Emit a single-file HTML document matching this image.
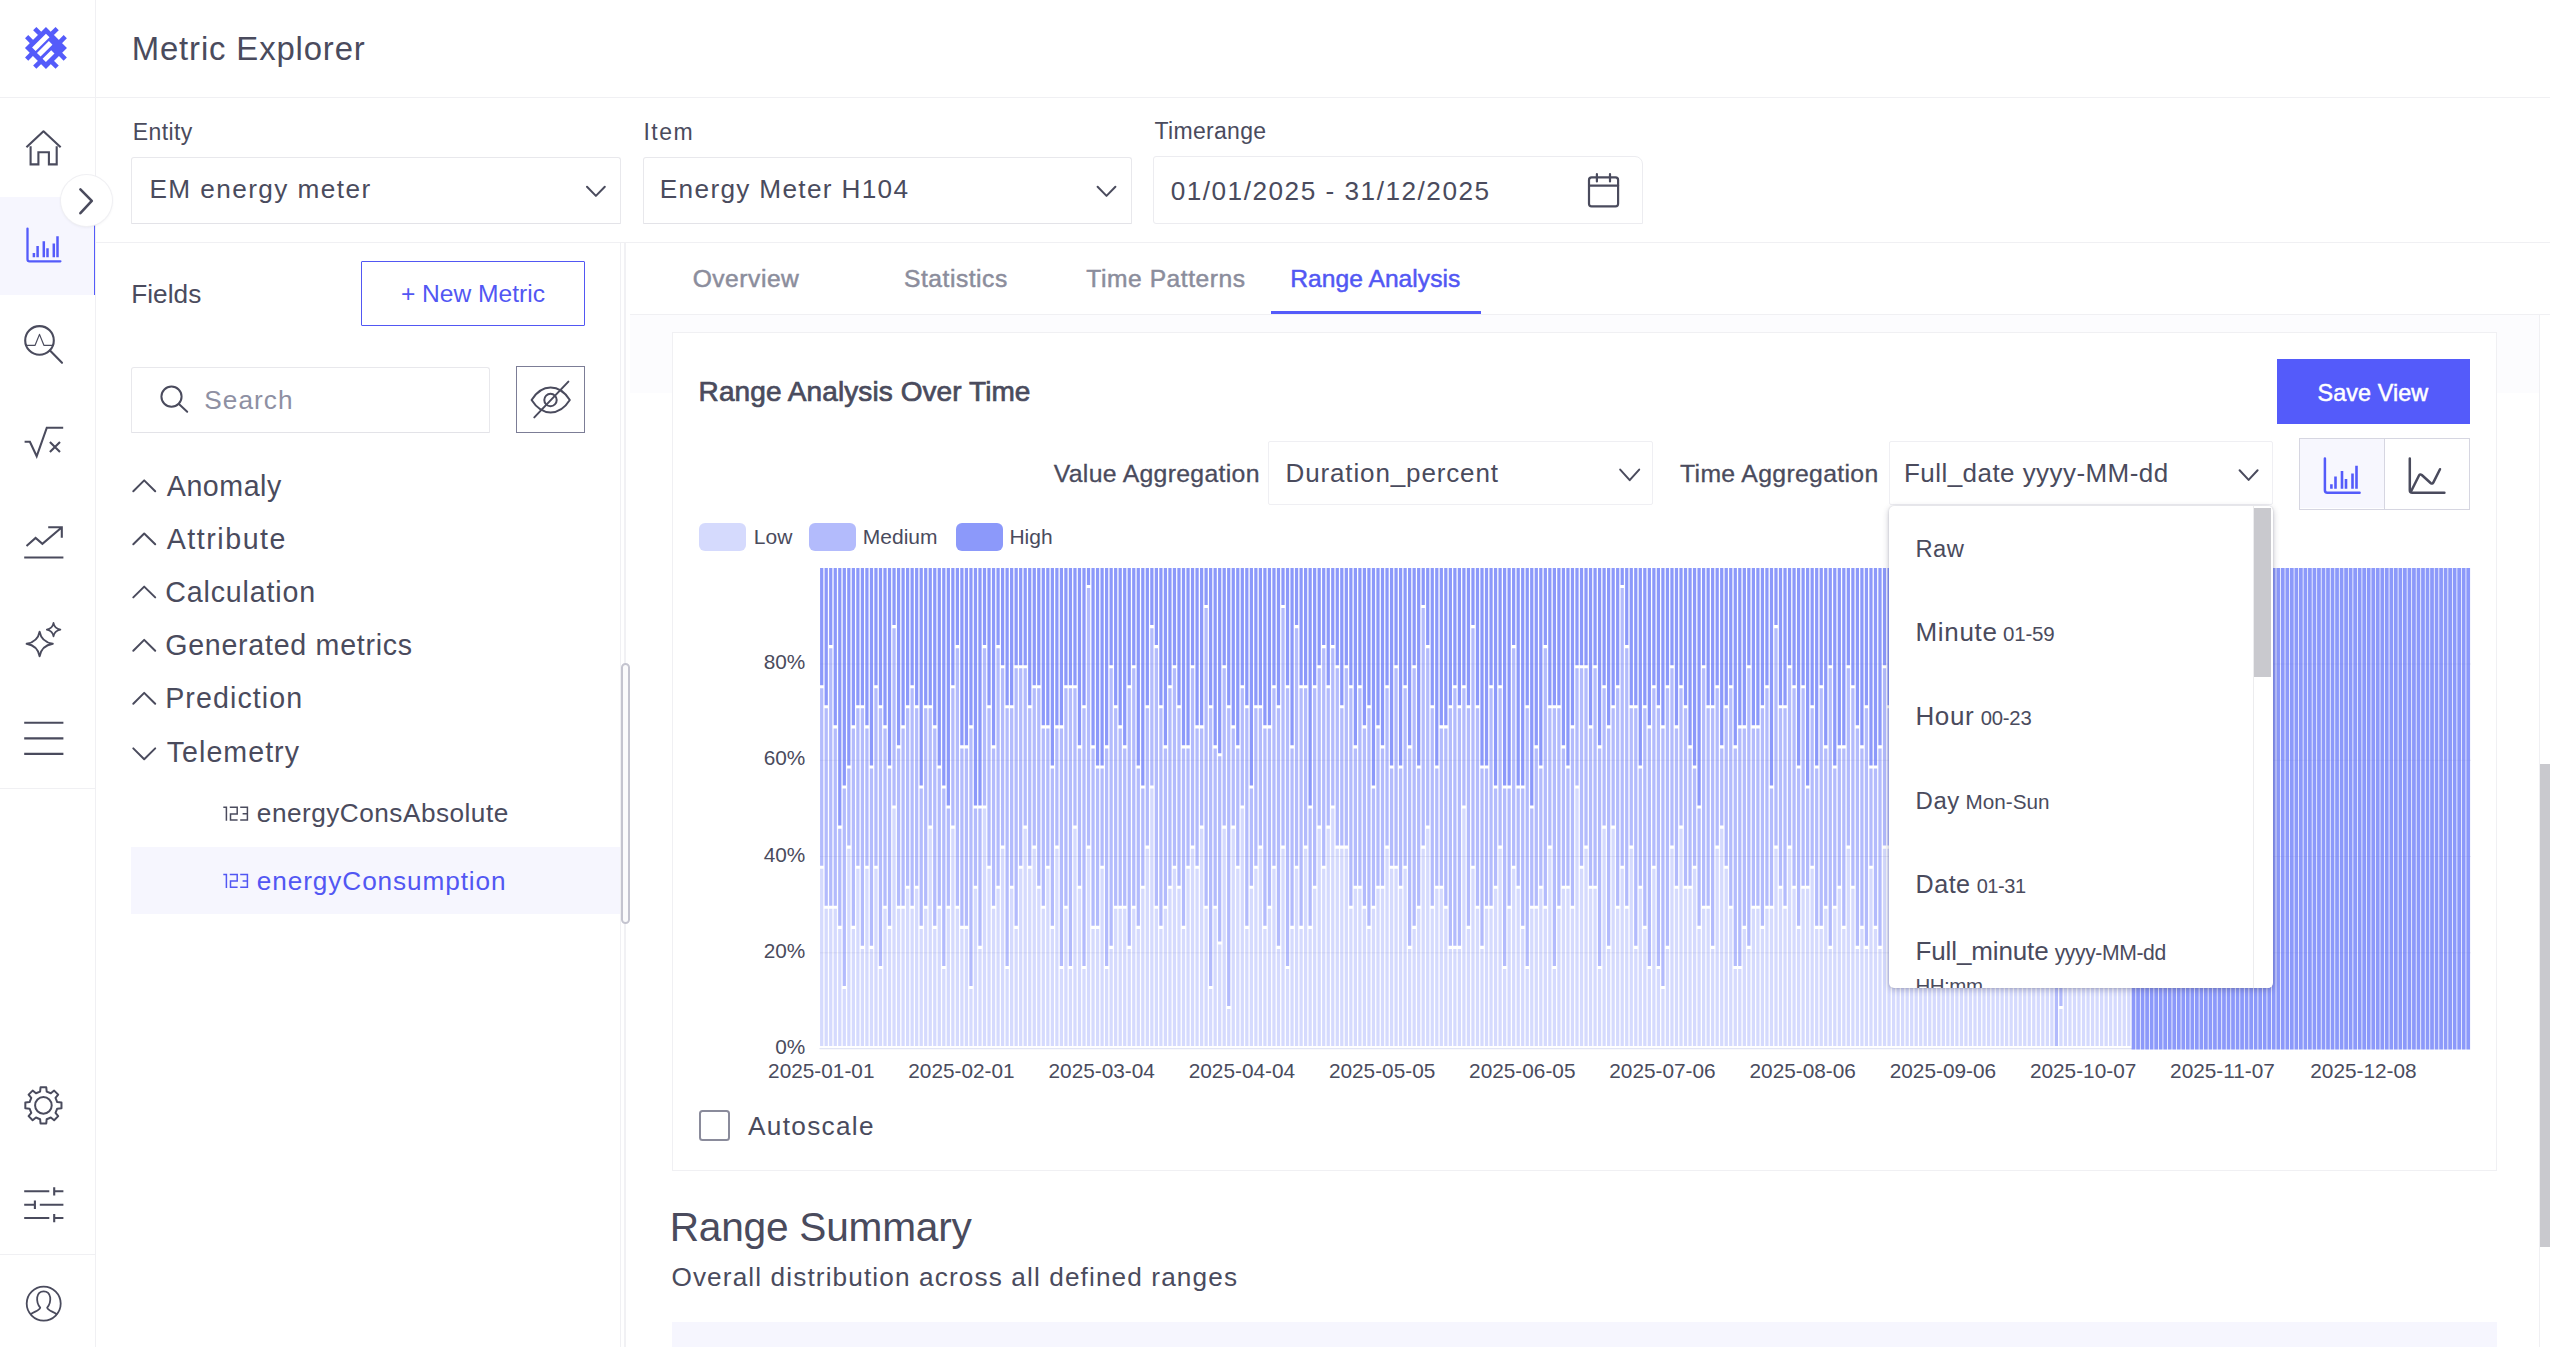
<!DOCTYPE html>
<html lang="en"><head><meta charset="utf-8"><title>Metric Explorer</title>
<style>
html,body{margin:0;padding:0}
body{width:2550px;height:1347px;overflow:hidden;position:relative;background:#fff;color:#4a4b5d;font-family:"Liberation Sans",sans-serif;}
.abs{position:absolute}
.t{position:absolute;white-space:pre;line-height:1;display:block}
.ax{font-size:20.8px}
.ln{position:absolute;background:#f0f0f3}
.box{position:absolute;box-sizing:border-box;border:1.6px solid #e8e8ec;border-bottom-color:#e3e3e8;border-radius:3px 3px 1px 1px;background:#fff}
.sel2{position:absolute;box-sizing:border-box;border:1.6px solid #efeff3;border-radius:2px;background:#fff}
.dd{position:absolute;left:1888.6px;top:506.4px;width:384px;height:481.4px;background:#fff;border-radius:5px;box-shadow:0 2px 6px rgba(40,40,70,.28),0 0 2px rgba(40,40,70,.18);overflow:hidden}
.ddin{position:absolute;left:0;top:0;width:365px;height:100%;overflow:hidden}
.ddtrack{position:absolute;left:364.4px;top:0;width:19px;height:100%;background:#fff;border-left:1px solid #ececee;box-sizing:border-box}
.ddthumb{position:absolute;left:365.5px;top:1.8px;width:17px;height:169px;background:#c9c9ce}
</style></head>
<body>
<!-- sidebar -->
<nav class="abs" style="left:0;top:0;width:95px;height:1347px;border-right:1px solid #f0f0f3"></nav>
<div class="abs" style="left:0;top:197.2px;width:94.4px;height:97.6px;background:#f6f6fe"></div>
<div class="abs" style="left:93.8px;top:197.2px;width:1.7px;height:97.6px;background:#545bfa"></div>
<div class="ln" style="left:0;top:97px;width:2550px;height:1px"></div>
<div class="ln" style="left:0;top:788px;width:95px;height:1px"></div>
<div class="ln" style="left:0;top:1254px;width:95px;height:1px"></div>
<!-- toolbar / panel lines -->
<div class="ln" style="left:96px;top:242px;width:2454px;height:1px"></div>
<div class="ln" style="left:620px;top:243px;width:1px;height:1104px"></div>
<div class="ln" style="left:624px;top:243px;width:2px;height:1104px;background:#f1f1f4"></div>
<div class="abs" style="left:630px;top:315px;width:1909px;height:77.5px;background:#fcfcfe"></div>
<div class="ln" style="left:630px;top:314px;width:1920px;height:1px"></div>
<div class="ln" style="left:2539px;top:315px;width:1px;height:1032px;background:#f0f0f3"></div>
<div class="abs" style="left:2539.6px;top:764px;width:10.4px;height:483px;background:#c9c9ce"></div>
<!-- collapse circle -->
<div class="abs" style="left:60.9px;top:175.3px;width:50.8px;height:50.8px;border-radius:50%;background:#fff;box-shadow:0 0 0 1px #f0f0f3, 0 1px 3px rgba(60,60,90,.10)"></div>
<svg class="abs" style="left:60px;top:175px" width="54" height="54" viewBox="60 175 54 54" fill="none" stroke="#4a4b5d" stroke-width="2.6" stroke-linecap="round" stroke-linejoin="round"><path d="M80.4 189.4L91.8 200.9L80.4 213.2"/></svg>
<!-- selects -->
<div class="box" style="left:131px;top:156.5px;width:490px;height:67px"></div>
<div class="box" style="left:642.5px;top:156.5px;width:489px;height:67px"></div>
<div class="sel2" style="left:1153px;top:156px;width:490px;height:68px;border-radius:3px 8px 0 3px;border-color:#ececf0"></div>
<!-- fields panel -->
<div class="abs" style="left:361px;top:261.2px;width:224px;height:64.4px;box-sizing:border-box;border:1.3px solid #5257f3;border-radius:1px"></div>
<div class="box" style="left:131px;top:366.5px;width:359px;height:66.3px"></div>
<div class="abs" style="left:516px;top:366px;width:69px;height:67px;box-sizing:border-box;border:1.2px solid #7c7d96"></div>
<div class="abs" style="left:131px;top:847.2px;width:489px;height:67.2px;background:#f6f6fe"></div>
<div class="abs" style="left:620.9px;top:662.9px;width:9px;height:261.6px;box-sizing:border-box;border:2.9px solid #c4c4cf;border-radius:4.5px;background:#fbfbfc"></div>
<!-- tabs underline -->
<div class="abs" style="left:1271px;top:310.6px;width:210px;height:3.2px;background:#545bfa"></div>
<!-- card -->
<section class="abs" style="left:672px;top:332px;width:1825px;height:838.5px;box-sizing:border-box;border:1px solid #f0f0f3;background:#fff"></section>
<div class="abs" style="left:2277.2px;top:358.9px;width:192.8px;height:65px;background:#545bfa"></div>
<div class="sel2" style="left:1268px;top:441.3px;width:385px;height:64.2px"></div>
<div class="sel2" style="left:1888.5px;top:441.3px;width:384.3px;height:64.2px"></div>
<div class="abs" style="left:2299.2px;top:438.2px;width:170.8px;height:71.4px;box-sizing:border-box;border:1.2px solid #d6d6e1;background:#fff"></div>
<div class="abs" style="left:2300.4px;top:439.4px;width:83.4px;height:69px;background:#f7f7fe"></div>
<div class="abs" style="left:2383.8px;top:439px;width:1.2px;height:70px;background:#d6d6e1"></div>
<!-- legend -->
<div class="abs" style="left:699.3px;top:523px;width:46.8px;height:27.8px;border-radius:6px;background:rgba(80,99,248,.238)"></div>
<div class="abs" style="left:809.4px;top:523px;width:46.8px;height:27.8px;border-radius:6px;background:rgba(80,99,248,.435)"></div>
<div class="abs" style="left:955.8px;top:523px;width:46.8px;height:27.8px;border-radius:6px;background:rgba(80,99,248,.655)"></div>
<svg class="abs" style="left:0;top:0" width="2550" height="1347" viewBox="0 0 2550 1347">
<g stroke="#efeff3" stroke-width="1"><path d="M820 952.8H2471"/><path d="M820 856.5H2471"/><path d="M820 760.3H2471"/><path d="M820 664.0H2471"/></g>
<path d="M819.5 1048.7H2132" stroke="#e1e4f4" stroke-width="1.3"/>
<path d="M820.07 868.75h3.25V1046.00h-3.25zM824.59 908.85h3.25V1046.00h-3.25zM829.12 908.85h3.25V1046.00h-3.25zM833.64 908.85h3.25V1046.00h-3.25zM838.16 928.90h3.25V1046.00h-3.25zM842.68 989.05h3.25V1046.00h-3.25zM847.21 848.70h3.25V1046.00h-3.25zM851.73 928.90h3.25V1046.00h-3.25zM856.25 868.75h3.25V1046.00h-3.25zM860.77 948.95h3.25V1046.00h-3.25zM865.30 868.75h3.25V1046.00h-3.25zM869.82 948.95h3.25V1046.00h-3.25zM874.34 868.75h3.25V1046.00h-3.25zM878.87 969.00h3.25V1046.00h-3.25zM883.39 908.85h3.25V1046.00h-3.25zM887.91 928.90h3.25V1046.00h-3.25zM892.43 808.60h3.25V1046.00h-3.25zM896.96 908.85h3.25V1046.00h-3.25zM901.48 908.85h3.25V1046.00h-3.25zM906.00 888.80h3.25V1046.00h-3.25zM910.52 908.85h3.25V1046.00h-3.25zM915.05 888.80h3.25V1046.00h-3.25zM919.57 928.90h3.25V1046.00h-3.25zM924.09 908.85h3.25V1046.00h-3.25zM928.61 828.65h3.25V1046.00h-3.25zM933.14 928.90h3.25V1046.00h-3.25zM937.66 908.85h3.25V1046.00h-3.25zM942.18 969.00h3.25V1046.00h-3.25zM946.71 908.85h3.25V1046.00h-3.25zM951.23 828.65h3.25V1046.00h-3.25zM955.75 908.85h3.25V1046.00h-3.25zM960.27 928.90h3.25V1046.00h-3.25zM964.80 928.90h3.25V1046.00h-3.25zM969.32 989.05h3.25V1046.00h-3.25zM973.84 888.80h3.25V1046.00h-3.25zM978.36 948.95h3.25V1046.00h-3.25zM982.89 808.60h3.25V1046.00h-3.25zM987.41 868.75h3.25V1046.00h-3.25zM991.93 908.85h3.25V1046.00h-3.25zM996.46 888.80h3.25V1046.00h-3.25zM1000.98 848.70h3.25V1046.00h-3.25zM1005.50 969.00h3.25V1046.00h-3.25zM1010.02 888.80h3.25V1046.00h-3.25zM1014.55 928.90h3.25V1046.00h-3.25zM1019.07 868.75h3.25V1046.00h-3.25zM1023.59 828.65h3.25V1046.00h-3.25zM1028.11 868.75h3.25V1046.00h-3.25zM1032.64 848.70h3.25V1046.00h-3.25zM1037.16 888.80h3.25V1046.00h-3.25zM1041.68 908.85h3.25V1046.00h-3.25zM1046.21 868.75h3.25V1046.00h-3.25zM1050.73 928.90h3.25V1046.00h-3.25zM1055.25 848.70h3.25V1046.00h-3.25zM1059.77 969.00h3.25V1046.00h-3.25zM1064.30 908.85h3.25V1046.00h-3.25zM1068.82 969.00h3.25V1046.00h-3.25zM1073.34 828.65h3.25V1046.00h-3.25zM1077.86 888.80h3.25V1046.00h-3.25zM1082.39 969.00h3.25V1046.00h-3.25zM1086.91 848.70h3.25V1046.00h-3.25zM1091.43 928.90h3.25V1046.00h-3.25zM1095.95 928.90h3.25V1046.00h-3.25zM1100.48 868.75h3.25V1046.00h-3.25zM1105.00 969.00h3.25V1046.00h-3.25zM1109.52 948.95h3.25V1046.00h-3.25zM1114.05 908.85h3.25V1046.00h-3.25zM1118.57 908.85h3.25V1046.00h-3.25zM1123.09 908.85h3.25V1046.00h-3.25zM1127.61 948.95h3.25V1046.00h-3.25zM1132.14 908.85h3.25V1046.00h-3.25zM1136.66 928.90h3.25V1046.00h-3.25zM1141.18 888.80h3.25V1046.00h-3.25zM1145.70 848.70h3.25V1046.00h-3.25zM1150.23 788.55h3.25V1046.00h-3.25zM1154.75 908.85h3.25V1046.00h-3.25zM1159.27 928.90h3.25V1046.00h-3.25zM1163.80 908.85h3.25V1046.00h-3.25zM1168.32 888.80h3.25V1046.00h-3.25zM1172.84 868.75h3.25V1046.00h-3.25zM1177.36 888.80h3.25V1046.00h-3.25zM1181.89 928.90h3.25V1046.00h-3.25zM1186.41 868.75h3.25V1046.00h-3.25zM1190.93 848.70h3.25V1046.00h-3.25zM1195.45 868.75h3.25V1046.00h-3.25zM1199.98 828.65h3.25V1046.00h-3.25zM1204.50 908.85h3.25V1046.00h-3.25zM1209.02 989.05h3.25V1046.00h-3.25zM1213.54 908.85h3.25V1046.00h-3.25zM1218.07 944.54h3.25V1046.00h-3.25zM1222.59 828.65h3.25V1046.00h-3.25zM1227.11 1009.10h3.25V1046.00h-3.25zM1231.64 828.65h3.25V1046.00h-3.25zM1236.16 868.75h3.25V1046.00h-3.25zM1240.68 808.60h3.25V1046.00h-3.25zM1245.20 928.90h3.25V1046.00h-3.25zM1249.73 888.80h3.25V1046.00h-3.25zM1254.25 868.75h3.25V1046.00h-3.25zM1258.77 848.70h3.25V1046.00h-3.25zM1263.29 928.90h3.25V1046.00h-3.25zM1267.82 908.85h3.25V1046.00h-3.25zM1272.34 868.75h3.25V1046.00h-3.25zM1276.86 948.95h3.25V1046.00h-3.25zM1281.39 848.70h3.25V1046.00h-3.25zM1285.91 969.00h3.25V1046.00h-3.25zM1290.43 928.90h3.25V1046.00h-3.25zM1294.95 868.75h3.25V1046.00h-3.25zM1299.48 928.90h3.25V1046.00h-3.25zM1304.00 848.70h3.25V1046.00h-3.25zM1308.52 928.90h3.25V1046.00h-3.25zM1313.04 888.80h3.25V1046.00h-3.25zM1317.57 828.65h3.25V1046.00h-3.25zM1322.09 868.75h3.25V1046.00h-3.25zM1326.61 828.65h3.25V1046.00h-3.25zM1331.14 808.60h3.25V1046.00h-3.25zM1335.66 848.70h3.25V1046.00h-3.25zM1340.18 848.70h3.25V1046.00h-3.25zM1344.70 848.70h3.25V1046.00h-3.25zM1349.23 908.85h3.25V1046.00h-3.25zM1353.75 888.80h3.25V1046.00h-3.25zM1358.27 888.80h3.25V1046.00h-3.25zM1362.79 908.85h3.25V1046.00h-3.25zM1367.32 928.90h3.25V1046.00h-3.25zM1371.84 908.85h3.25V1046.00h-3.25zM1376.36 888.80h3.25V1046.00h-3.25zM1380.88 888.80h3.25V1046.00h-3.25zM1385.41 848.70h3.25V1046.00h-3.25zM1389.93 868.75h3.25V1046.00h-3.25zM1394.45 868.75h3.25V1046.00h-3.25zM1398.98 888.80h3.25V1046.00h-3.25zM1403.50 868.75h3.25V1046.00h-3.25zM1408.02 948.95h3.25V1046.00h-3.25zM1412.54 928.90h3.25V1046.00h-3.25zM1417.07 908.85h3.25V1046.00h-3.25zM1421.59 848.70h3.25V1046.00h-3.25zM1426.11 828.65h3.25V1046.00h-3.25zM1430.63 908.85h3.25V1046.00h-3.25zM1435.16 888.80h3.25V1046.00h-3.25zM1439.68 888.80h3.25V1046.00h-3.25zM1444.20 908.85h3.25V1046.00h-3.25zM1448.73 948.95h3.25V1046.00h-3.25zM1453.25 948.95h3.25V1046.00h-3.25zM1457.77 948.95h3.25V1046.00h-3.25zM1462.29 808.60h3.25V1046.00h-3.25zM1466.82 928.90h3.25V1046.00h-3.25zM1471.34 868.75h3.25V1046.00h-3.25zM1475.86 908.85h3.25V1046.00h-3.25zM1480.38 948.95h3.25V1046.00h-3.25zM1484.91 908.85h3.25V1046.00h-3.25zM1489.43 908.85h3.25V1046.00h-3.25zM1493.95 888.80h3.25V1046.00h-3.25zM1498.48 848.70h3.25V1046.00h-3.25zM1503.00 969.00h3.25V1046.00h-3.25zM1507.52 908.85h3.25V1046.00h-3.25zM1512.04 868.75h3.25V1046.00h-3.25zM1516.57 888.80h3.25V1046.00h-3.25zM1521.09 928.90h3.25V1046.00h-3.25zM1525.61 969.00h3.25V1046.00h-3.25zM1530.13 908.85h3.25V1046.00h-3.25zM1534.66 908.85h3.25V1046.00h-3.25zM1539.18 888.80h3.25V1046.00h-3.25zM1543.70 908.85h3.25V1046.00h-3.25zM1548.22 848.70h3.25V1046.00h-3.25zM1552.75 969.00h3.25V1046.00h-3.25zM1557.27 908.85h3.25V1046.00h-3.25zM1561.79 888.80h3.25V1046.00h-3.25zM1566.32 888.80h3.25V1046.00h-3.25zM1570.84 908.85h3.25V1046.00h-3.25zM1575.36 788.55h3.25V1046.00h-3.25zM1579.88 868.75h3.25V1046.00h-3.25zM1584.41 848.70h3.25V1046.00h-3.25zM1588.93 888.80h3.25V1046.00h-3.25zM1593.45 888.80h3.25V1046.00h-3.25zM1597.97 969.00h3.25V1046.00h-3.25zM1602.50 828.65h3.25V1046.00h-3.25zM1607.02 948.95h3.25V1046.00h-3.25zM1611.54 828.65h3.25V1046.00h-3.25zM1616.07 908.85h3.25V1046.00h-3.25zM1620.59 868.75h3.25V1046.00h-3.25zM1625.11 908.85h3.25V1046.00h-3.25zM1629.63 848.70h3.25V1046.00h-3.25zM1634.16 948.95h3.25V1046.00h-3.25zM1638.68 888.80h3.25V1046.00h-3.25zM1643.20 928.90h3.25V1046.00h-3.25zM1647.72 969.00h3.25V1046.00h-3.25zM1652.25 868.75h3.25V1046.00h-3.25zM1656.77 969.00h3.25V1046.00h-3.25zM1661.29 989.05h3.25V1046.00h-3.25zM1665.81 948.95h3.25V1046.00h-3.25zM1670.34 848.70h3.25V1046.00h-3.25zM1674.86 888.80h3.25V1046.00h-3.25zM1679.38 828.65h3.25V1046.00h-3.25zM1683.91 888.80h3.25V1046.00h-3.25zM1688.43 888.80h3.25V1046.00h-3.25zM1692.95 868.75h3.25V1046.00h-3.25zM1697.47 928.90h3.25V1046.00h-3.25zM1702.00 908.85h3.25V1046.00h-3.25zM1706.52 908.85h3.25V1046.00h-3.25zM1711.04 948.95h3.25V1046.00h-3.25zM1715.56 848.70h3.25V1046.00h-3.25zM1720.09 828.65h3.25V1046.00h-3.25zM1724.61 868.75h3.25V1046.00h-3.25zM1729.13 908.85h3.25V1046.00h-3.25zM1733.66 969.00h3.25V1046.00h-3.25zM1738.18 969.00h3.25V1046.00h-3.25zM1742.70 928.90h3.25V1046.00h-3.25zM1747.22 948.95h3.25V1046.00h-3.25zM1751.75 908.85h3.25V1046.00h-3.25zM1756.27 908.85h3.25V1046.00h-3.25zM1760.79 928.90h3.25V1046.00h-3.25zM1765.31 908.85h3.25V1046.00h-3.25zM1769.84 908.85h3.25V1046.00h-3.25zM1774.36 848.70h3.25V1046.00h-3.25zM1778.88 888.80h3.25V1046.00h-3.25zM1783.41 908.85h3.25V1046.00h-3.25zM1787.93 848.70h3.25V1046.00h-3.25zM1792.45 888.80h3.25V1046.00h-3.25zM1796.97 928.90h3.25V1046.00h-3.25zM1801.50 888.80h3.25V1046.00h-3.25zM1806.02 888.80h3.25V1046.00h-3.25zM1810.54 868.75h3.25V1046.00h-3.25zM1815.06 928.90h3.25V1046.00h-3.25zM1819.59 928.90h3.25V1046.00h-3.25zM1824.11 908.85h3.25V1046.00h-3.25zM1828.63 948.95h3.25V1046.00h-3.25zM1833.15 908.85h3.25V1046.00h-3.25zM1837.68 888.80h3.25V1046.00h-3.25zM1842.20 928.90h3.25V1046.00h-3.25zM1846.72 848.70h3.25V1046.00h-3.25zM1851.25 888.80h3.25V1046.00h-3.25zM1855.77 948.95h3.25V1046.00h-3.25zM1860.29 928.90h3.25V1046.00h-3.25zM1864.81 948.95h3.25V1046.00h-3.25zM1869.34 868.75h3.25V1046.00h-3.25zM1873.86 928.90h3.25V1046.00h-3.25zM1878.38 948.95h3.25V1046.00h-3.25zM1882.90 848.70h3.25V1046.00h-3.25zM1887.43 848.70h3.25V1046.00h-3.25zM1891.95 928.90h3.25V1046.00h-3.25zM1896.47 928.90h3.25V1046.00h-3.25zM1901.00 868.75h3.25V1046.00h-3.25zM1905.52 828.65h3.25V1046.00h-3.25zM1910.04 888.80h3.25V1046.00h-3.25zM1914.56 848.70h3.25V1046.00h-3.25zM1919.09 948.95h3.25V1046.00h-3.25zM1923.61 888.80h3.25V1046.00h-3.25zM1928.13 848.70h3.25V1046.00h-3.25zM1932.65 888.80h3.25V1046.00h-3.25zM1937.18 848.70h3.25V1046.00h-3.25zM1941.70 948.95h3.25V1046.00h-3.25zM1946.22 928.90h3.25V1046.00h-3.25zM1950.75 928.90h3.25V1046.00h-3.25zM1955.27 848.70h3.25V1046.00h-3.25zM1959.79 908.85h3.25V1046.00h-3.25zM1964.31 948.95h3.25V1046.00h-3.25zM1968.84 848.70h3.25V1046.00h-3.25zM1973.36 828.65h3.25V1046.00h-3.25zM1977.88 848.70h3.25V1046.00h-3.25zM1982.40 888.80h3.25V1046.00h-3.25zM1986.93 808.60h3.25V1046.00h-3.25zM1991.45 908.85h3.25V1046.00h-3.25zM1995.97 888.80h3.25V1046.00h-3.25zM2000.49 908.85h3.25V1046.00h-3.25zM2005.02 848.70h3.25V1046.00h-3.25zM2009.54 868.75h3.25V1046.00h-3.25zM2014.06 948.95h3.25V1046.00h-3.25zM2018.59 868.75h3.25V1046.00h-3.25zM2023.11 908.85h3.25V1046.00h-3.25zM2027.63 948.95h3.25V1046.00h-3.25zM2032.15 848.70h3.25V1046.00h-3.25zM2036.68 788.55h3.25V1046.00h-3.25zM2041.20 888.80h3.25V1046.00h-3.25zM2045.72 908.85h3.25V1046.00h-3.25zM2050.24 908.85h3.25V1046.00h-3.25zM2059.29 1009.10h3.25V1046.00h-3.25zM2063.81 908.85h3.25V1046.00h-3.25zM2068.34 888.80h3.25V1046.00h-3.25zM2072.86 908.85h3.25V1046.00h-3.25zM2077.38 808.60h3.25V1046.00h-3.25zM2081.90 928.90h3.25V1046.00h-3.25zM2086.43 948.95h3.25V1046.00h-3.25zM2090.95 888.80h3.25V1046.00h-3.25zM2095.47 888.80h3.25V1046.00h-3.25zM2099.99 928.90h3.25V1046.00h-3.25zM2104.52 868.75h3.25V1046.00h-3.25zM2109.04 928.90h3.25V1046.00h-3.25zM2113.56 828.65h3.25V1046.00h-3.25zM2118.08 888.80h3.25V1046.00h-3.25zM2122.61 868.75h3.25V1046.00h-3.25zM2127.13 828.65h3.25V1046.00h-3.25z" fill="#5063f8" fill-opacity="0.238"/>
<path d="M820.07 688.30h3.25V865.65h-3.25zM824.59 708.35h3.25V905.75h-3.25zM829.12 648.20h3.25V905.75h-3.25zM833.64 728.40h3.25V905.75h-3.25zM838.16 828.65h3.25V925.80h-3.25zM842.68 788.55h3.25V985.95h-3.25zM847.21 768.50h3.25V845.60h-3.25zM851.73 728.40h3.25V925.80h-3.25zM856.25 708.35h3.25V865.65h-3.25zM860.77 708.35h3.25V945.85h-3.25zM865.30 728.40h3.25V865.65h-3.25zM869.82 768.50h3.25V945.85h-3.25zM874.34 688.30h3.25V865.65h-3.25zM878.87 708.35h3.25V965.90h-3.25zM883.39 728.40h3.25V905.75h-3.25zM887.91 768.50h3.25V925.80h-3.25zM892.43 628.15h3.25V805.50h-3.25zM896.96 748.45h3.25V905.75h-3.25zM901.48 728.40h3.25V905.75h-3.25zM906.00 708.35h3.25V885.70h-3.25zM910.52 688.30h3.25V905.75h-3.25zM915.05 708.35h3.25V885.70h-3.25zM919.57 788.55h3.25V925.80h-3.25zM924.09 708.35h3.25V905.75h-3.25zM928.61 708.35h3.25V825.55h-3.25zM933.14 728.40h3.25V925.80h-3.25zM937.66 768.50h3.25V905.75h-3.25zM942.18 788.55h3.25V965.90h-3.25zM946.71 808.60h3.25V905.75h-3.25zM951.23 688.30h3.25V825.55h-3.25zM955.75 648.20h3.25V905.75h-3.25zM960.27 748.45h3.25V925.80h-3.25zM964.80 748.45h3.25V925.80h-3.25zM969.32 728.40h3.25V985.95h-3.25zM973.84 808.60h3.25V885.70h-3.25zM978.36 808.60h3.25V945.85h-3.25zM982.89 648.20h3.25V805.50h-3.25zM987.41 708.35h3.25V865.65h-3.25zM991.93 748.45h3.25V905.75h-3.25zM996.46 648.20h3.25V885.70h-3.25zM1000.98 668.25h3.25V845.60h-3.25zM1005.50 708.35h3.25V965.90h-3.25zM1010.02 708.35h3.25V885.70h-3.25zM1014.55 668.25h3.25V925.80h-3.25zM1019.07 668.25h3.25V865.65h-3.25zM1023.59 668.25h3.25V825.55h-3.25zM1028.11 708.35h3.25V865.65h-3.25zM1032.64 688.30h3.25V845.60h-3.25zM1037.16 688.30h3.25V885.70h-3.25zM1041.68 728.40h3.25V905.75h-3.25zM1046.21 728.40h3.25V865.65h-3.25zM1050.73 768.50h3.25V925.80h-3.25zM1055.25 728.40h3.25V845.60h-3.25zM1059.77 728.40h3.25V965.90h-3.25zM1064.30 688.30h3.25V905.75h-3.25zM1068.82 688.30h3.25V965.90h-3.25zM1073.34 688.30h3.25V825.55h-3.25zM1077.86 748.45h3.25V885.70h-3.25zM1082.39 708.35h3.25V965.90h-3.25zM1086.91 588.05h3.25V845.60h-3.25zM1091.43 748.45h3.25V925.80h-3.25zM1095.95 768.50h3.25V925.80h-3.25zM1100.48 768.50h3.25V865.65h-3.25zM1105.00 748.45h3.25V965.90h-3.25zM1109.52 668.25h3.25V945.85h-3.25zM1114.05 708.35h3.25V905.75h-3.25zM1118.57 728.40h3.25V905.75h-3.25zM1123.09 748.45h3.25V905.75h-3.25zM1127.61 688.30h3.25V945.85h-3.25zM1132.14 668.25h3.25V905.75h-3.25zM1136.66 768.50h3.25V925.80h-3.25zM1141.18 788.55h3.25V885.70h-3.25zM1145.70 708.35h3.25V845.60h-3.25zM1150.23 628.15h3.25V785.45h-3.25zM1154.75 648.20h3.25V905.75h-3.25zM1159.27 708.35h3.25V925.80h-3.25zM1163.80 748.45h3.25V905.75h-3.25zM1168.32 688.30h3.25V885.70h-3.25zM1172.84 668.25h3.25V865.65h-3.25zM1177.36 708.35h3.25V885.70h-3.25zM1181.89 748.45h3.25V925.80h-3.25zM1186.41 748.45h3.25V865.65h-3.25zM1190.93 668.25h3.25V845.60h-3.25zM1195.45 728.40h3.25V865.65h-3.25zM1199.98 728.40h3.25V825.55h-3.25zM1204.50 608.10h3.25V905.75h-3.25zM1209.02 708.35h3.25V985.95h-3.25zM1213.54 748.45h3.25V905.75h-3.25zM1218.07 756.27h3.25V941.44h-3.25zM1222.59 668.25h3.25V825.55h-3.25zM1227.11 708.35h3.25V1006.00h-3.25zM1231.64 728.40h3.25V825.55h-3.25zM1236.16 748.45h3.25V865.65h-3.25zM1240.68 688.30h3.25V805.50h-3.25zM1245.20 708.35h3.25V925.80h-3.25zM1249.73 788.55h3.25V885.70h-3.25zM1254.25 708.35h3.25V865.65h-3.25zM1258.77 708.35h3.25V845.60h-3.25zM1263.29 728.40h3.25V925.80h-3.25zM1267.82 728.40h3.25V905.75h-3.25zM1272.34 688.30h3.25V865.65h-3.25zM1276.86 708.35h3.25V945.85h-3.25zM1281.39 608.10h3.25V845.60h-3.25zM1285.91 688.30h3.25V965.90h-3.25zM1290.43 748.45h3.25V925.80h-3.25zM1294.95 628.15h3.25V865.65h-3.25zM1299.48 688.30h3.25V925.80h-3.25zM1304.00 688.30h3.25V845.60h-3.25zM1308.52 808.60h3.25V925.80h-3.25zM1313.04 688.30h3.25V885.70h-3.25zM1317.57 668.25h3.25V825.55h-3.25zM1322.09 648.20h3.25V865.65h-3.25zM1326.61 688.30h3.25V825.55h-3.25zM1331.14 648.20h3.25V805.50h-3.25zM1335.66 668.25h3.25V845.60h-3.25zM1340.18 708.35h3.25V845.60h-3.25zM1344.70 668.25h3.25V845.60h-3.25zM1349.23 688.30h3.25V905.75h-3.25zM1353.75 748.45h3.25V885.70h-3.25zM1358.27 688.30h3.25V885.70h-3.25zM1362.79 728.40h3.25V905.75h-3.25zM1367.32 708.35h3.25V925.80h-3.25zM1371.84 788.55h3.25V905.75h-3.25zM1376.36 728.40h3.25V885.70h-3.25zM1380.88 748.45h3.25V885.70h-3.25zM1385.41 688.30h3.25V845.60h-3.25zM1389.93 768.50h3.25V865.65h-3.25zM1394.45 668.25h3.25V865.65h-3.25zM1398.98 768.50h3.25V885.70h-3.25zM1403.50 688.30h3.25V865.65h-3.25zM1408.02 748.45h3.25V945.85h-3.25zM1412.54 668.25h3.25V925.80h-3.25zM1417.07 768.50h3.25V905.75h-3.25zM1421.59 608.10h3.25V845.60h-3.25zM1426.11 648.20h3.25V825.55h-3.25zM1430.63 708.35h3.25V905.75h-3.25zM1435.16 768.50h3.25V885.70h-3.25zM1439.68 728.40h3.25V885.70h-3.25zM1444.20 728.40h3.25V905.75h-3.25zM1448.73 708.35h3.25V945.85h-3.25zM1453.25 688.30h3.25V945.85h-3.25zM1457.77 708.35h3.25V945.85h-3.25zM1462.29 688.30h3.25V805.50h-3.25zM1466.82 708.35h3.25V925.80h-3.25zM1471.34 628.15h3.25V865.65h-3.25zM1475.86 708.35h3.25V905.75h-3.25zM1480.38 768.50h3.25V945.85h-3.25zM1484.91 768.50h3.25V905.75h-3.25zM1489.43 688.30h3.25V905.75h-3.25zM1493.95 788.55h3.25V885.70h-3.25zM1498.48 688.30h3.25V845.60h-3.25zM1503.00 788.55h3.25V965.90h-3.25zM1507.52 788.55h3.25V905.75h-3.25zM1512.04 648.20h3.25V865.65h-3.25zM1516.57 788.55h3.25V885.70h-3.25zM1521.09 788.55h3.25V925.80h-3.25zM1525.61 708.35h3.25V965.90h-3.25zM1530.13 808.60h3.25V905.75h-3.25zM1534.66 748.45h3.25V905.75h-3.25zM1539.18 768.50h3.25V885.70h-3.25zM1543.70 648.20h3.25V905.75h-3.25zM1548.22 708.35h3.25V845.60h-3.25zM1552.75 708.35h3.25V965.90h-3.25zM1557.27 708.35h3.25V905.75h-3.25zM1561.79 748.45h3.25V885.70h-3.25zM1566.32 768.50h3.25V885.70h-3.25zM1570.84 728.40h3.25V905.75h-3.25zM1575.36 668.25h3.25V785.45h-3.25zM1579.88 668.25h3.25V865.65h-3.25zM1584.41 668.25h3.25V845.60h-3.25zM1588.93 728.40h3.25V885.70h-3.25zM1593.45 668.25h3.25V885.70h-3.25zM1597.97 748.45h3.25V965.90h-3.25zM1602.50 688.30h3.25V825.55h-3.25zM1607.02 728.40h3.25V945.85h-3.25zM1611.54 708.35h3.25V825.55h-3.25zM1616.07 688.30h3.25V905.75h-3.25zM1620.59 588.05h3.25V865.65h-3.25zM1625.11 648.20h3.25V905.75h-3.25zM1629.63 708.35h3.25V845.60h-3.25zM1634.16 708.35h3.25V945.85h-3.25zM1638.68 768.50h3.25V885.70h-3.25zM1643.20 708.35h3.25V925.80h-3.25zM1647.72 728.40h3.25V965.90h-3.25zM1652.25 688.30h3.25V865.65h-3.25zM1656.77 708.35h3.25V965.90h-3.25zM1661.29 728.40h3.25V985.95h-3.25zM1665.81 688.30h3.25V945.85h-3.25zM1670.34 668.25h3.25V845.60h-3.25zM1674.86 728.40h3.25V885.70h-3.25zM1679.38 688.30h3.25V825.55h-3.25zM1683.91 708.35h3.25V885.70h-3.25zM1688.43 748.45h3.25V885.70h-3.25zM1692.95 768.50h3.25V865.65h-3.25zM1697.47 808.60h3.25V925.80h-3.25zM1702.00 668.25h3.25V905.75h-3.25zM1706.52 708.35h3.25V905.75h-3.25zM1711.04 708.35h3.25V945.85h-3.25zM1715.56 688.30h3.25V845.60h-3.25zM1720.09 748.45h3.25V825.55h-3.25zM1724.61 708.35h3.25V865.65h-3.25zM1729.13 688.30h3.25V905.75h-3.25zM1733.66 748.45h3.25V965.90h-3.25zM1738.18 728.40h3.25V965.90h-3.25zM1742.70 728.40h3.25V925.80h-3.25zM1747.22 668.25h3.25V945.85h-3.25zM1751.75 728.40h3.25V905.75h-3.25zM1756.27 728.40h3.25V905.75h-3.25zM1760.79 708.35h3.25V925.80h-3.25zM1765.31 688.30h3.25V905.75h-3.25zM1769.84 788.55h3.25V905.75h-3.25zM1774.36 628.15h3.25V845.60h-3.25zM1778.88 708.35h3.25V885.70h-3.25zM1783.41 708.35h3.25V905.75h-3.25zM1787.93 668.25h3.25V845.60h-3.25zM1792.45 688.30h3.25V885.70h-3.25zM1796.97 768.50h3.25V925.80h-3.25zM1801.50 688.30h3.25V885.70h-3.25zM1806.02 788.55h3.25V885.70h-3.25zM1810.54 708.35h3.25V865.65h-3.25zM1815.06 768.50h3.25V925.80h-3.25zM1819.59 688.30h3.25V925.80h-3.25zM1824.11 748.45h3.25V905.75h-3.25zM1828.63 668.25h3.25V945.85h-3.25zM1833.15 768.50h3.25V905.75h-3.25zM1837.68 748.45h3.25V885.70h-3.25zM1842.20 748.45h3.25V925.80h-3.25zM1846.72 668.25h3.25V845.60h-3.25zM1851.25 688.30h3.25V885.70h-3.25zM1855.77 728.40h3.25V945.85h-3.25zM1860.29 748.45h3.25V925.80h-3.25zM1864.81 708.35h3.25V945.85h-3.25zM1869.34 768.50h3.25V865.65h-3.25zM1873.86 768.50h3.25V925.80h-3.25zM1878.38 748.45h3.25V945.85h-3.25zM1882.90 668.25h3.25V845.60h-3.25zM1887.43 708.35h3.25V845.60h-3.25zM1891.95 688.30h3.25V925.80h-3.25zM1896.47 708.35h3.25V925.80h-3.25zM1901.00 708.35h3.25V865.65h-3.25zM1905.52 748.45h3.25V825.55h-3.25zM1910.04 688.30h3.25V885.70h-3.25zM1914.56 708.35h3.25V845.60h-3.25zM1919.09 748.45h3.25V945.85h-3.25zM1923.61 788.55h3.25V885.70h-3.25zM1928.13 688.30h3.25V845.60h-3.25zM1932.65 688.30h3.25V885.70h-3.25zM1937.18 688.30h3.25V845.60h-3.25zM1941.70 668.25h3.25V945.85h-3.25zM1946.22 668.25h3.25V925.80h-3.25zM1950.75 708.35h3.25V925.80h-3.25zM1955.27 708.35h3.25V845.60h-3.25zM1959.79 808.60h3.25V905.75h-3.25zM1964.31 728.40h3.25V945.85h-3.25zM1968.84 688.30h3.25V845.60h-3.25zM1973.36 708.35h3.25V825.55h-3.25zM1977.88 668.25h3.25V845.60h-3.25zM1982.40 688.30h3.25V885.70h-3.25zM1986.93 648.20h3.25V805.50h-3.25zM1991.45 708.35h3.25V905.75h-3.25zM1995.97 728.40h3.25V885.70h-3.25zM2000.49 728.40h3.25V905.75h-3.25zM2005.02 668.25h3.25V845.60h-3.25zM2009.54 588.05h3.25V865.65h-3.25zM2014.06 708.35h3.25V945.85h-3.25zM2018.59 728.40h3.25V865.65h-3.25zM2023.11 788.55h3.25V905.75h-3.25zM2027.63 708.35h3.25V945.85h-3.25zM2032.15 708.35h3.25V845.60h-3.25zM2036.68 668.25h3.25V785.45h-3.25zM2041.20 728.40h3.25V885.70h-3.25zM2045.72 808.60h3.25V905.75h-3.25zM2050.24 728.40h3.25V905.75h-3.25zM2054.77 728.40h3.25V1046.00h-3.25zM2059.29 748.45h3.25V1006.00h-3.25zM2063.81 728.40h3.25V905.75h-3.25zM2068.34 708.35h3.25V885.70h-3.25zM2072.86 708.35h3.25V905.75h-3.25zM2077.38 628.15h3.25V805.50h-3.25zM2081.90 768.50h3.25V925.80h-3.25zM2086.43 708.35h3.25V945.85h-3.25zM2090.95 688.30h3.25V885.70h-3.25zM2095.47 748.45h3.25V885.70h-3.25zM2099.99 768.50h3.25V925.80h-3.25zM2104.52 648.20h3.25V865.65h-3.25zM2109.04 728.40h3.25V925.80h-3.25zM2113.56 748.45h3.25V825.55h-3.25zM2118.08 748.45h3.25V885.70h-3.25zM2122.61 728.40h3.25V865.65h-3.25zM2127.13 688.30h3.25V825.55h-3.25z" fill="#5063f8" fill-opacity="0.435"/>
<path d="M820.07 568.00h3.25V685.20h-3.25zM824.59 568.00h3.25V705.25h-3.25zM829.12 568.00h3.25V645.10h-3.25zM833.64 568.00h3.25V725.30h-3.25zM838.16 568.00h3.25V825.55h-3.25zM842.68 568.00h3.25V785.45h-3.25zM847.21 568.00h3.25V765.40h-3.25zM851.73 568.00h3.25V725.30h-3.25zM856.25 568.00h3.25V705.25h-3.25zM860.77 568.00h3.25V705.25h-3.25zM865.30 568.00h3.25V725.30h-3.25zM869.82 568.00h3.25V765.40h-3.25zM874.34 568.00h3.25V685.20h-3.25zM878.87 568.00h3.25V705.25h-3.25zM883.39 568.00h3.25V725.30h-3.25zM887.91 568.00h3.25V765.40h-3.25zM892.43 568.00h3.25V625.05h-3.25zM896.96 568.00h3.25V745.35h-3.25zM901.48 568.00h3.25V725.30h-3.25zM906.00 568.00h3.25V705.25h-3.25zM910.52 568.00h3.25V685.20h-3.25zM915.05 568.00h3.25V705.25h-3.25zM919.57 568.00h3.25V785.45h-3.25zM924.09 568.00h3.25V705.25h-3.25zM928.61 568.00h3.25V705.25h-3.25zM933.14 568.00h3.25V725.30h-3.25zM937.66 568.00h3.25V765.40h-3.25zM942.18 568.00h3.25V785.45h-3.25zM946.71 568.00h3.25V805.50h-3.25zM951.23 568.00h3.25V685.20h-3.25zM955.75 568.00h3.25V645.10h-3.25zM960.27 568.00h3.25V745.35h-3.25zM964.80 568.00h3.25V745.35h-3.25zM969.32 568.00h3.25V725.30h-3.25zM973.84 568.00h3.25V805.50h-3.25zM978.36 568.00h3.25V805.50h-3.25zM982.89 568.00h3.25V645.10h-3.25zM987.41 568.00h3.25V705.25h-3.25zM991.93 568.00h3.25V745.35h-3.25zM996.46 568.00h3.25V645.10h-3.25zM1000.98 568.00h3.25V665.15h-3.25zM1005.50 568.00h3.25V705.25h-3.25zM1010.02 568.00h3.25V705.25h-3.25zM1014.55 568.00h3.25V665.15h-3.25zM1019.07 568.00h3.25V665.15h-3.25zM1023.59 568.00h3.25V665.15h-3.25zM1028.11 568.00h3.25V705.25h-3.25zM1032.64 568.00h3.25V685.20h-3.25zM1037.16 568.00h3.25V685.20h-3.25zM1041.68 568.00h3.25V725.30h-3.25zM1046.21 568.00h3.25V725.30h-3.25zM1050.73 568.00h3.25V765.40h-3.25zM1055.25 568.00h3.25V725.30h-3.25zM1059.77 568.00h3.25V725.30h-3.25zM1064.30 568.00h3.25V685.20h-3.25zM1068.82 568.00h3.25V685.20h-3.25zM1073.34 568.00h3.25V685.20h-3.25zM1077.86 568.00h3.25V745.35h-3.25zM1082.39 568.00h3.25V705.25h-3.25zM1086.91 568.00h3.25V584.95h-3.25zM1091.43 568.00h3.25V745.35h-3.25zM1095.95 568.00h3.25V765.40h-3.25zM1100.48 568.00h3.25V765.40h-3.25zM1105.00 568.00h3.25V745.35h-3.25zM1109.52 568.00h3.25V665.15h-3.25zM1114.05 568.00h3.25V705.25h-3.25zM1118.57 568.00h3.25V725.30h-3.25zM1123.09 568.00h3.25V745.35h-3.25zM1127.61 568.00h3.25V685.20h-3.25zM1132.14 568.00h3.25V665.15h-3.25zM1136.66 568.00h3.25V765.40h-3.25zM1141.18 568.00h3.25V785.45h-3.25zM1145.70 568.00h3.25V705.25h-3.25zM1150.23 568.00h3.25V625.05h-3.25zM1154.75 568.00h3.25V645.10h-3.25zM1159.27 568.00h3.25V705.25h-3.25zM1163.80 568.00h3.25V745.35h-3.25zM1168.32 568.00h3.25V685.20h-3.25zM1172.84 568.00h3.25V665.15h-3.25zM1177.36 568.00h3.25V705.25h-3.25zM1181.89 568.00h3.25V745.35h-3.25zM1186.41 568.00h3.25V745.35h-3.25zM1190.93 568.00h3.25V665.15h-3.25zM1195.45 568.00h3.25V725.30h-3.25zM1199.98 568.00h3.25V725.30h-3.25zM1204.50 568.00h3.25V605.00h-3.25zM1209.02 568.00h3.25V705.25h-3.25zM1213.54 568.00h3.25V745.35h-3.25zM1218.07 568.00h3.25V753.17h-3.25zM1222.59 568.00h3.25V665.15h-3.25zM1227.11 568.00h3.25V705.25h-3.25zM1231.64 568.00h3.25V725.30h-3.25zM1236.16 568.00h3.25V745.35h-3.25zM1240.68 568.00h3.25V685.20h-3.25zM1245.20 568.00h3.25V705.25h-3.25zM1249.73 568.00h3.25V785.45h-3.25zM1254.25 568.00h3.25V705.25h-3.25zM1258.77 568.00h3.25V705.25h-3.25zM1263.29 568.00h3.25V725.30h-3.25zM1267.82 568.00h3.25V725.30h-3.25zM1272.34 568.00h3.25V685.20h-3.25zM1276.86 568.00h3.25V705.25h-3.25zM1281.39 568.00h3.25V605.00h-3.25zM1285.91 568.00h3.25V685.20h-3.25zM1290.43 568.00h3.25V745.35h-3.25zM1294.95 568.00h3.25V625.05h-3.25zM1299.48 568.00h3.25V685.20h-3.25zM1304.00 568.00h3.25V685.20h-3.25zM1308.52 568.00h3.25V805.50h-3.25zM1313.04 568.00h3.25V685.20h-3.25zM1317.57 568.00h3.25V665.15h-3.25zM1322.09 568.00h3.25V645.10h-3.25zM1326.61 568.00h3.25V685.20h-3.25zM1331.14 568.00h3.25V645.10h-3.25zM1335.66 568.00h3.25V665.15h-3.25zM1340.18 568.00h3.25V705.25h-3.25zM1344.70 568.00h3.25V665.15h-3.25zM1349.23 568.00h3.25V685.20h-3.25zM1353.75 568.00h3.25V745.35h-3.25zM1358.27 568.00h3.25V685.20h-3.25zM1362.79 568.00h3.25V725.30h-3.25zM1367.32 568.00h3.25V705.25h-3.25zM1371.84 568.00h3.25V785.45h-3.25zM1376.36 568.00h3.25V725.30h-3.25zM1380.88 568.00h3.25V745.35h-3.25zM1385.41 568.00h3.25V685.20h-3.25zM1389.93 568.00h3.25V765.40h-3.25zM1394.45 568.00h3.25V665.15h-3.25zM1398.98 568.00h3.25V765.40h-3.25zM1403.50 568.00h3.25V685.20h-3.25zM1408.02 568.00h3.25V745.35h-3.25zM1412.54 568.00h3.25V665.15h-3.25zM1417.07 568.00h3.25V765.40h-3.25zM1421.59 568.00h3.25V605.00h-3.25zM1426.11 568.00h3.25V645.10h-3.25zM1430.63 568.00h3.25V705.25h-3.25zM1435.16 568.00h3.25V765.40h-3.25zM1439.68 568.00h3.25V725.30h-3.25zM1444.20 568.00h3.25V725.30h-3.25zM1448.73 568.00h3.25V705.25h-3.25zM1453.25 568.00h3.25V685.20h-3.25zM1457.77 568.00h3.25V705.25h-3.25zM1462.29 568.00h3.25V685.20h-3.25zM1466.82 568.00h3.25V705.25h-3.25zM1471.34 568.00h3.25V625.05h-3.25zM1475.86 568.00h3.25V705.25h-3.25zM1480.38 568.00h3.25V765.40h-3.25zM1484.91 568.00h3.25V765.40h-3.25zM1489.43 568.00h3.25V685.20h-3.25zM1493.95 568.00h3.25V785.45h-3.25zM1498.48 568.00h3.25V685.20h-3.25zM1503.00 568.00h3.25V785.45h-3.25zM1507.52 568.00h3.25V785.45h-3.25zM1512.04 568.00h3.25V645.10h-3.25zM1516.57 568.00h3.25V785.45h-3.25zM1521.09 568.00h3.25V785.45h-3.25zM1525.61 568.00h3.25V705.25h-3.25zM1530.13 568.00h3.25V805.50h-3.25zM1534.66 568.00h3.25V745.35h-3.25zM1539.18 568.00h3.25V765.40h-3.25zM1543.70 568.00h3.25V645.10h-3.25zM1548.22 568.00h3.25V705.25h-3.25zM1552.75 568.00h3.25V705.25h-3.25zM1557.27 568.00h3.25V705.25h-3.25zM1561.79 568.00h3.25V745.35h-3.25zM1566.32 568.00h3.25V765.40h-3.25zM1570.84 568.00h3.25V725.30h-3.25zM1575.36 568.00h3.25V665.15h-3.25zM1579.88 568.00h3.25V665.15h-3.25zM1584.41 568.00h3.25V665.15h-3.25zM1588.93 568.00h3.25V725.30h-3.25zM1593.45 568.00h3.25V665.15h-3.25zM1597.97 568.00h3.25V745.35h-3.25zM1602.50 568.00h3.25V685.20h-3.25zM1607.02 568.00h3.25V725.30h-3.25zM1611.54 568.00h3.25V705.25h-3.25zM1616.07 568.00h3.25V685.20h-3.25zM1620.59 568.00h3.25V584.95h-3.25zM1625.11 568.00h3.25V645.10h-3.25zM1629.63 568.00h3.25V705.25h-3.25zM1634.16 568.00h3.25V705.25h-3.25zM1638.68 568.00h3.25V765.40h-3.25zM1643.20 568.00h3.25V705.25h-3.25zM1647.72 568.00h3.25V725.30h-3.25zM1652.25 568.00h3.25V685.20h-3.25zM1656.77 568.00h3.25V705.25h-3.25zM1661.29 568.00h3.25V725.30h-3.25zM1665.81 568.00h3.25V685.20h-3.25zM1670.34 568.00h3.25V665.15h-3.25zM1674.86 568.00h3.25V725.30h-3.25zM1679.38 568.00h3.25V685.20h-3.25zM1683.91 568.00h3.25V705.25h-3.25zM1688.43 568.00h3.25V745.35h-3.25zM1692.95 568.00h3.25V765.40h-3.25zM1697.47 568.00h3.25V805.50h-3.25zM1702.00 568.00h3.25V665.15h-3.25zM1706.52 568.00h3.25V705.25h-3.25zM1711.04 568.00h3.25V705.25h-3.25zM1715.56 568.00h3.25V685.20h-3.25zM1720.09 568.00h3.25V745.35h-3.25zM1724.61 568.00h3.25V705.25h-3.25zM1729.13 568.00h3.25V685.20h-3.25zM1733.66 568.00h3.25V745.35h-3.25zM1738.18 568.00h3.25V725.30h-3.25zM1742.70 568.00h3.25V725.30h-3.25zM1747.22 568.00h3.25V665.15h-3.25zM1751.75 568.00h3.25V725.30h-3.25zM1756.27 568.00h3.25V725.30h-3.25zM1760.79 568.00h3.25V705.25h-3.25zM1765.31 568.00h3.25V685.20h-3.25zM1769.84 568.00h3.25V785.45h-3.25zM1774.36 568.00h3.25V625.05h-3.25zM1778.88 568.00h3.25V705.25h-3.25zM1783.41 568.00h3.25V705.25h-3.25zM1787.93 568.00h3.25V665.15h-3.25zM1792.45 568.00h3.25V685.20h-3.25zM1796.97 568.00h3.25V765.40h-3.25zM1801.50 568.00h3.25V685.20h-3.25zM1806.02 568.00h3.25V785.45h-3.25zM1810.54 568.00h3.25V705.25h-3.25zM1815.06 568.00h3.25V765.40h-3.25zM1819.59 568.00h3.25V685.20h-3.25zM1824.11 568.00h3.25V745.35h-3.25zM1828.63 568.00h3.25V665.15h-3.25zM1833.15 568.00h3.25V765.40h-3.25zM1837.68 568.00h3.25V745.35h-3.25zM1842.20 568.00h3.25V745.35h-3.25zM1846.72 568.00h3.25V665.15h-3.25zM1851.25 568.00h3.25V685.20h-3.25zM1855.77 568.00h3.25V725.30h-3.25zM1860.29 568.00h3.25V745.35h-3.25zM1864.81 568.00h3.25V705.25h-3.25zM1869.34 568.00h3.25V765.40h-3.25zM1873.86 568.00h3.25V765.40h-3.25zM1878.38 568.00h3.25V745.35h-3.25zM1882.90 568.00h3.25V665.15h-3.25zM1887.43 568.00h3.25V705.25h-3.25zM1891.95 568.00h3.25V685.20h-3.25zM1896.47 568.00h3.25V705.25h-3.25zM1901.00 568.00h3.25V705.25h-3.25zM1905.52 568.00h3.25V745.35h-3.25zM1910.04 568.00h3.25V685.20h-3.25zM1914.56 568.00h3.25V705.25h-3.25zM1919.09 568.00h3.25V745.35h-3.25zM1923.61 568.00h3.25V785.45h-3.25zM1928.13 568.00h3.25V685.20h-3.25zM1932.65 568.00h3.25V685.20h-3.25zM1937.18 568.00h3.25V685.20h-3.25zM1941.70 568.00h3.25V665.15h-3.25zM1946.22 568.00h3.25V665.15h-3.25zM1950.75 568.00h3.25V705.25h-3.25zM1955.27 568.00h3.25V705.25h-3.25zM1959.79 568.00h3.25V805.50h-3.25zM1964.31 568.00h3.25V725.30h-3.25zM1968.84 568.00h3.25V685.20h-3.25zM1973.36 568.00h3.25V705.25h-3.25zM1977.88 568.00h3.25V665.15h-3.25zM1982.40 568.00h3.25V685.20h-3.25zM1986.93 568.00h3.25V645.10h-3.25zM1991.45 568.00h3.25V705.25h-3.25zM1995.97 568.00h3.25V725.30h-3.25zM2000.49 568.00h3.25V725.30h-3.25zM2005.02 568.00h3.25V665.15h-3.25zM2009.54 568.00h3.25V584.95h-3.25zM2014.06 568.00h3.25V705.25h-3.25zM2018.59 568.00h3.25V725.30h-3.25zM2023.11 568.00h3.25V785.45h-3.25zM2027.63 568.00h3.25V705.25h-3.25zM2032.15 568.00h3.25V705.25h-3.25zM2036.68 568.00h3.25V665.15h-3.25zM2041.20 568.00h3.25V725.30h-3.25zM2045.72 568.00h3.25V805.50h-3.25zM2050.24 568.00h3.25V725.30h-3.25zM2054.77 568.00h3.25V725.30h-3.25zM2059.29 568.00h3.25V745.35h-3.25zM2063.81 568.00h3.25V725.30h-3.25zM2068.34 568.00h3.25V705.25h-3.25zM2072.86 568.00h3.25V705.25h-3.25zM2077.38 568.00h3.25V625.05h-3.25zM2081.90 568.00h3.25V765.40h-3.25zM2086.43 568.00h3.25V705.25h-3.25zM2090.95 568.00h3.25V685.20h-3.25zM2095.47 568.00h3.25V745.35h-3.25zM2099.99 568.00h3.25V765.40h-3.25zM2104.52 568.00h3.25V645.10h-3.25zM2109.04 568.00h3.25V725.30h-3.25zM2113.56 568.00h3.25V745.35h-3.25zM2118.08 568.00h3.25V745.35h-3.25zM2122.61 568.00h3.25V725.30h-3.25zM2127.13 568.00h3.25V685.20h-3.25zM2131.65 568.00h3.75V1049.50h-3.75zM2136.18 568.00h3.75V1049.50h-3.75zM2140.70 568.00h3.75V1049.50h-3.75zM2145.22 568.00h3.75V1049.50h-3.75zM2149.74 568.00h3.75V1049.50h-3.75zM2154.27 568.00h3.75V1049.50h-3.75zM2158.79 568.00h3.75V1049.50h-3.75zM2163.31 568.00h3.75V1049.50h-3.75zM2167.83 568.00h3.75V1049.50h-3.75zM2172.36 568.00h3.75V1049.50h-3.75zM2176.88 568.00h3.75V1049.50h-3.75zM2181.40 568.00h3.75V1049.50h-3.75zM2185.93 568.00h3.75V1049.50h-3.75zM2190.45 568.00h3.75V1049.50h-3.75zM2194.97 568.00h3.75V1049.50h-3.75zM2199.49 568.00h3.75V1049.50h-3.75zM2204.02 568.00h3.75V1049.50h-3.75zM2208.54 568.00h3.75V1049.50h-3.75zM2213.06 568.00h3.75V1049.50h-3.75zM2217.58 568.00h3.75V1049.50h-3.75zM2222.11 568.00h3.75V1049.50h-3.75zM2226.63 568.00h3.75V1049.50h-3.75zM2231.15 568.00h3.75V1049.50h-3.75zM2235.68 568.00h3.75V1049.50h-3.75zM2240.20 568.00h3.75V1049.50h-3.75zM2244.72 568.00h3.75V1049.50h-3.75zM2249.24 568.00h3.75V1049.50h-3.75zM2253.77 568.00h3.75V1049.50h-3.75zM2258.29 568.00h3.75V1049.50h-3.75zM2262.81 568.00h3.75V1049.50h-3.75zM2267.33 568.00h3.75V1049.50h-3.75zM2271.86 568.00h3.75V1049.50h-3.75zM2276.38 568.00h3.75V1049.50h-3.75zM2280.90 568.00h3.75V1049.50h-3.75zM2285.42 568.00h3.75V1049.50h-3.75zM2289.95 568.00h3.75V1049.50h-3.75zM2294.47 568.00h3.75V1049.50h-3.75zM2298.99 568.00h3.75V1049.50h-3.75zM2303.52 568.00h3.75V1049.50h-3.75zM2308.04 568.00h3.75V1049.50h-3.75zM2312.56 568.00h3.75V1049.50h-3.75zM2317.08 568.00h3.75V1049.50h-3.75zM2321.61 568.00h3.75V1049.50h-3.75zM2326.13 568.00h3.75V1049.50h-3.75zM2330.65 568.00h3.75V1049.50h-3.75zM2335.17 568.00h3.75V1049.50h-3.75zM2339.70 568.00h3.75V1049.50h-3.75zM2344.22 568.00h3.75V1049.50h-3.75zM2348.74 568.00h3.75V1049.50h-3.75zM2353.27 568.00h3.75V1049.50h-3.75zM2357.79 568.00h3.75V1049.50h-3.75zM2362.31 568.00h3.75V1049.50h-3.75zM2366.83 568.00h3.75V1049.50h-3.75zM2371.36 568.00h3.75V1049.50h-3.75zM2375.88 568.00h3.75V1049.50h-3.75zM2380.40 568.00h3.75V1049.50h-3.75zM2384.92 568.00h3.75V1049.50h-3.75zM2389.45 568.00h3.75V1049.50h-3.75zM2393.97 568.00h3.75V1049.50h-3.75zM2398.49 568.00h3.75V1049.50h-3.75zM2403.02 568.00h3.75V1049.50h-3.75zM2407.54 568.00h3.75V1049.50h-3.75zM2412.06 568.00h3.75V1049.50h-3.75zM2416.58 568.00h3.75V1049.50h-3.75zM2421.11 568.00h3.75V1049.50h-3.75zM2425.63 568.00h3.75V1049.50h-3.75zM2430.15 568.00h3.75V1049.50h-3.75zM2434.67 568.00h3.75V1049.50h-3.75zM2439.20 568.00h3.75V1049.50h-3.75zM2443.72 568.00h3.75V1049.50h-3.75zM2448.24 568.00h3.75V1049.50h-3.75zM2452.76 568.00h3.75V1049.50h-3.75zM2457.29 568.00h3.75V1049.50h-3.75zM2461.81 568.00h3.75V1049.50h-3.75zM2466.33 568.00h3.75V1049.50h-3.75z" fill="#5063f8" fill-opacity="0.655"/>
</svg>
<span class="t ax" style="right:1744.7px;top:1037.19px">0%</span><span class="t ax" style="right:1744.7px;top:940.95px">20%</span><span class="t ax" style="right:1744.7px;top:844.71px">40%</span><span class="t ax" style="right:1744.7px;top:748.47px">60%</span><span class="t ax" style="right:1744.7px;top:652.23px">80%</span><span class="t ax" style="left:768.1px;top:1060.79px">2025-01-01</span><span class="t ax" style="left:908.3px;top:1060.79px">2025-02-01</span><span class="t ax" style="left:1048.5px;top:1060.79px">2025-03-04</span><span class="t ax" style="left:1188.7px;top:1060.79px">2025-04-04</span><span class="t ax" style="left:1328.9px;top:1060.79px">2025-05-05</span><span class="t ax" style="left:1469.1px;top:1060.79px">2025-06-05</span><span class="t ax" style="left:1609.3px;top:1060.79px">2025-07-06</span><span class="t ax" style="left:1749.5px;top:1060.79px">2025-08-06</span><span class="t ax" style="left:1889.7px;top:1060.79px">2025-09-06</span><span class="t ax" style="left:2029.9px;top:1060.79px">2025-10-07</span><span class="t ax" style="left:2170.1px;top:1060.79px">2025-11-07</span><span class="t ax" style="left:2310.3px;top:1060.79px">2025-12-08</span>
<!-- autoscale -->
<div class="abs" style="left:699px;top:1110.2px;width:30.8px;height:31px;box-sizing:border-box;border:2px solid #8a8b9b;border-radius:3.5px;background:#fff"></div>
<!-- summary block -->
<div class="abs" style="left:672px;top:1322px;width:1825px;height:25px;background:#f6f6fe"></div>
<svg class="abs" style="left:0;top:0" width="120" height="1347" viewBox="0 0 120 1347" fill="none" stroke="#4a4b5d" stroke-width="2.1" stroke-linecap="round" stroke-linejoin="round">
<!-- logo -->
<g transform="translate(45.95 47.9) rotate(45) scale(0.0530)" stroke="none" fill="#545bfa">
<path fill-rule="evenodd" d="M-280 -280H280V280H-280z M-190 -190H-95V180H-190z M-52 -130H44V188H-52z M100 -40H188V190H100z"/>
<path d="M-407 -151H-270V-65H-407z M-151 -407H-65V-270H-151z M-407 65H-270V151H-407z M65 -407H151V-270H65z M270 -151H407V-65H270z M-151 270H-65V407H-151z M270 65H407V151H270z M65 270H151V407H65z"/>
</g>
<!-- home -->
<path d="M27.2 146.6L43.5 131.3L59.9 146.6" stroke-linecap="square"/>
<path d="M30.6 146.2V164.4H38.4V152.3H48.9V164.4H56.7V146.2" stroke-linecap="butt" stroke-linejoin="miter"/>
<!-- bar chart (active) -->
<g stroke="#545bfa">
<path d="M27.5 228.6V259.2Q27.5 261.3 29.6 261.3H60.4" stroke-width="2.3"/>
<path d="M33.9 257.3V253 M37.6 257.3V246 M43.8 257.3V241.2 M47.5 257.3V248.2 M53.8 257.3V243.5 M57.5 257.3V236.2" stroke-width="2.5" stroke-linecap="butt"/>
</g>
<!-- anomaly search -->
<circle cx="39.5" cy="340.4" r="14.3"/>
<path d="M50.0 350.6L62.0 362.8"/>
<path d="M26 345.3H35.1L39.5 334.4L43.9 345.3H52.8" stroke-width="1.2"/>
<!-- sqrt x -->
<path d="M24.6 441.7H29.9L36.7 456.3L46.8 427.7H63.2" stroke-linecap="butt" stroke-linejoin="miter"/>
<path d="M49.9 441.9L60.0 452.0M60.0 441.9L49.9 452.0" stroke-linecap="butt"/>
<!-- trend -->
<path d="M26.5 546.0L35.6 538.0L42.4 543.8L61.6 527.5M48.2 527.3H61.8V537.8" stroke-linecap="butt" stroke-linejoin="miter"/>
<path d="M24.2 557.5H63.4" stroke-linecap="butt"/>
<!-- sparkles -->
<path d="M39.6 631.6Q41.4 641.9 52.8 643.8Q41.4 645.7 39.6 656.4Q37.8 645.7 26.6 643.8Q37.8 641.9 39.6 631.6z" stroke-width="1.9"/>
<path d="M53.5 622.9Q54.4 628.6 60.4 629.6Q54.4 630.6 53.5 636.4Q52.6 630.6 46.8 629.6Q52.6 628.6 53.5 622.9z" stroke-width="1.7"/>
<!-- hamburger -->
<path d="M24.2 722.8H63.4M24.2 738.4H63.4M24.2 753.9H63.4" stroke-linecap="butt"/>
<!-- gear -->
<path d="M40.54 1087.33L46.26 1087.33L46.71 1091.59L50.82 1093.29L54.16 1090.59L58.21 1094.64L55.51 1097.98L57.21 1102.09L61.47 1102.54L61.47 1108.26L57.21 1108.71L55.51 1112.82L58.21 1116.16L54.16 1120.21L50.82 1117.51L46.71 1119.21L46.26 1123.47L40.54 1123.47L40.09 1119.21L35.98 1117.51L32.64 1120.21L28.59 1116.16L31.29 1112.82L29.59 1108.71L25.33 1108.26L25.33 1102.54L29.59 1102.09L31.29 1097.98L28.59 1094.64L32.64 1090.59L35.98 1093.29L40.09 1091.59z" stroke-width="2"/>
<circle cx="43.4" cy="1105.4" r="8.3" stroke-width="2"/>
<!-- sliders -->
<path d="M24.2 1191.3H49.3M54.2 1187.2V1195.6M54.2 1191.3H63.4 M24.2 1204.7H34.9M34.9 1200.5V1208.9M39.8 1204.7H63.4 M24.2 1218H49.3M54.2 1213.9V1222.3M54.2 1218H63.4" stroke-linecap="butt"/>
<!-- user -->
<circle cx="43.7" cy="1303.6" r="17" stroke-width="1.8"/>
<path d="M30.8 1314.2C34 1311.5 39.6 1310.6 40.2 1307.6C37.6 1304.6 36.8 1301.2 37.2 1297.4C37.8 1293.6 40.4 1291.4 43.7 1291.4C47 1291.4 49.6 1293.6 50.2 1297.4C50.6 1301.2 49.8 1304.6 47.2 1307.6C47.8 1310.6 53.4 1311.5 56.6 1314.2" stroke-width="1.8"/>
</svg>
<svg class="abs" style="left:0;top:0" width="2550" height="1347" viewBox="0 0 2550 1347" fill="none" stroke="#4a4b5d" stroke-width="2" stroke-linecap="round" stroke-linejoin="round">
<!-- select chevrons -->
<path d="M587.0 186.8L595.9 195.9L604.8 186.8" stroke-width="2"/>
<path d="M1097.6 186.8L1106.5 195.9L1115.4 186.8" stroke-width="2"/>
<path d="M1620.2 469.6L1629.7 480.2L1639.2 469.6" stroke-width="2"/>
<path d="M2239.6 470.2L2248.6 479.9L2257.6 470.2" stroke-width="2"/>
<!-- calendar -->
<rect x="1589" y="177.4" width="29.1" height="29" rx="2.6" stroke-width="2.2"/>
<path d="M1589 185.6H1618.1M1596.9 174.2V181.4M1610 174.2V181.4" stroke-width="2.2"/>
<!-- search icon -->
<circle cx="171.5" cy="396.6" r="10.1"/>
<path d="M178.9 404.0L187.2 411.7"/>
<!-- eye-off -->
<path d="M531.6 400C537 391.5 543.5 387.6 550.6 387.6C557.7 387.6 564.4 391.5 569.8 400C564.4 408.5 557.7 412.4 550.6 412.4C543.5 412.4 537 408.5 531.6 400z"/>
<circle cx="550.5" cy="400" r="6.2"/>
<path d="M568.4 381.6L534.3 417.4"/>
<!-- tree chevrons -->
<path d="M133.3 491.2L144.2 480.4L155.2 491.2"/><path d="M133.3 544.3L144.2 533.5L155.2 544.3"/><path d="M133.3 597.4L144.2 586.6L155.2 597.4"/><path d="M133.3 650.7L144.2 639.9L155.2 650.7"/><path d="M133.3 703.7L144.2 692.9L155.2 703.7"/>
<path d="M133.3 748.4L144.2 759.2L155.2 748.4"/>
<!-- 123 icons -->
<g stroke-width="1.5" stroke-linecap="butt" stroke-linejoin="miter">
<path d="M223.3 807.3H226.4V820.7M229.8 807.3H237.2V813.9H230.5V820H237.6M240.2 807.3H247.4V820H240.2M242.6 813.7H247.4"/>
<path stroke="#5257f3" d="M223.3 874.5H226.4V887.9M229.8 874.5H237.2V881.1H230.5V887.2H237.6M240.2 874.5H247.4V887.2H240.2M242.6 880.9H247.4"/>
</g>
<!-- toggle icons -->
<g stroke="#545bfa" stroke-width="2.5">
<path d="M2324.9 458.4V490.2Q2324.9 492.7 2327.4 492.7H2359.6"/>
<path stroke-linecap="butt" d="M2331.4 488.7V484.3M2335.5 488.7V476.4M2342 488.7V471M2346 488.7V479M2352.5 488.7V473.5M2356.5 488.7V465.8" stroke-width="2.6"/>
</g>
<path d="M2409.8 458.4V490.2Q2409.8 492.7 2412.3 492.7H2444.4" stroke-width="2.5"/>
<path d="M2411 491.5L2419 475.5Q2420 473.6 2421.8 475L2430.6 483Q2432.4 484.4 2433.4 482.4L2440 469.2" stroke-width="2.5"/>
</svg>
<span class="t" style="left:131.72px;top:32.65px;font-size:32.9px;letter-spacing:0.850px;">Metric Explorer</span><span class="t" style="left:132.86px;top:120.83px;font-size:23.0px;letter-spacing:0.386px;">Entity</span><span class="t" style="left:643.40px;top:120.83px;font-size:23.0px;letter-spacing:1.522px;">Item</span><span class="t" style="left:1154.56px;top:119.53px;font-size:23.0px;letter-spacing:0.308px;">Timerange</span><span class="t" style="left:149.40px;top:175.82px;font-size:26.2px;letter-spacing:1.420px;">EM energy meter</span><span class="t" style="left:659.84px;top:176.12px;font-size:26.2px;letter-spacing:1.318px;">Energy Meter H104</span><span class="t" style="left:1170.64px;top:177.62px;font-size:26.2px;letter-spacing:1.503px;">01/01/2025 - 31/12/2025</span><span class="t" style="left:131.18px;top:280.62px;font-size:26.2px;letter-spacing:0.040px;">Fields</span><span class="t" style="left:400.96px;top:282.08px;font-size:24.6px;color:#5257f3;letter-spacing:-0.012px;">+ New Metric</span><span class="t" style="left:204.18px;top:386.62px;font-size:26.2px;color:#8e90a3;letter-spacing:1.087px;">Search</span><span class="t" style="left:166.78px;top:471.59px;font-size:28.6px;letter-spacing:0.552px;">Anomaly</span><span class="t" style="left:166.78px;top:524.69px;font-size:28.6px;letter-spacing:1.522px;">Attribute</span><span class="t" style="left:165.18px;top:577.79px;font-size:28.6px;letter-spacing:0.851px;">Calculation</span><span class="t" style="left:165.18px;top:631.09px;font-size:28.6px;letter-spacing:0.734px;">Generated metrics</span><span class="t" style="left:165.18px;top:684.09px;font-size:28.6px;letter-spacing:1.092px;">Prediction</span><span class="t" style="left:166.78px;top:738.29px;font-size:28.6px;letter-spacing:1.033px;">Telemetry</span><span class="t" style="left:256.86px;top:800.22px;font-size:26.2px;letter-spacing:0.486px;">energyConsAbsolute</span><span class="t" style="left:256.86px;top:868.42px;font-size:26.2px;color:#5257f3;letter-spacing:0.898px;">energyConsumption</span><span class="t" style="left:692.64px;top:267.18px;font-size:24.6px;color:#8b8d9c;-webkit-text-stroke:0.5px;letter-spacing:0.534px;">Overview</span><span class="t" style="left:904.08px;top:267.18px;font-size:24.6px;color:#8b8d9c;-webkit-text-stroke:0.5px;letter-spacing:0.528px;">Statistics</span><span class="t" style="left:1086.32px;top:267.18px;font-size:24.6px;color:#8b8d9c;-webkit-text-stroke:0.5px;letter-spacing:0.552px;">Time Patterns</span><span class="t" style="left:1290.28px;top:267.18px;font-size:24.6px;color:#5257f3;-webkit-text-stroke:0.5px;letter-spacing:0.041px;">Range Analysis</span><span class="t" style="left:698.62px;top:377.60px;font-size:28.0px;-webkit-text-stroke:0.7px;letter-spacing:0.083px;">Range Analysis Over Time</span><span class="t" style="left:2317.54px;top:381.79px;font-size:23.4px;color:#ffffff;-webkit-text-stroke:0.5px;letter-spacing:0.071px;">Save View</span><span class="t" style="left:1053.78px;top:462.31px;font-size:24.8px;-webkit-text-stroke:0.3px;letter-spacing:0.302px;">Value Aggregation</span><span class="t" style="left:1285.52px;top:460.29px;font-size:26.0px;letter-spacing:0.867px;">Duration_percent</span><span class="t" style="left:1680.00px;top:461.81px;font-size:24.8px;-webkit-text-stroke:0.3px;letter-spacing:0.320px;">Time Aggregation</span><span class="t" style="left:1904.06px;top:459.79px;font-size:26.0px;letter-spacing:0.440px;">Full_date yyyy-MM-dd</span><span class="t" style="left:748.00px;top:1113.22px;font-size:26.2px;letter-spacing:1.321px;">Autoscale</span><span class="t" style="left:669.70px;top:1206.89px;font-size:40.65px;letter-spacing:-0.233px;">Range Summary</span><span class="t" style="left:671.42px;top:1264.02px;font-size:26.2px;letter-spacing:1.118px;">Overall distribution across all defined ranges</span><span class="t" style="left:753.86px;top:526.02px;font-size:21.0px;">Low</span><span class="t" style="left:862.84px;top:526.02px;font-size:21.0px;">Medium</span><span class="t" style="left:1009.40px;top:526.02px;font-size:21.0px;">High</span>
<div class="dd"><div class="ddin"><span class="t" style="left:26.90px;top:31.30px;font-size:23.74px;letter-spacing:0.500px;">Raw</span><span class="t" style="left:26.90px;top:112.69px;font-size:26.0px;letter-spacing:0.695px;">Minute</span><span class="t" style="left:114.38px;top:117.32px;font-size:20.53px;letter-spacing:-0.200px;">01-59</span><span class="t" style="left:26.90px;top:196.59px;font-size:26.0px;letter-spacing:0.607px;">Hour</span><span class="t" style="left:92.16px;top:201.45px;font-size:20.26px;letter-spacing:-0.220px;">00-23</span><span class="t" style="left:26.90px;top:282.63px;font-size:23.95px;letter-spacing:0.620px;">Day</span><span class="t" style="left:77.02px;top:285.39px;font-size:20.69px;letter-spacing:-0.007px;">Mon-Sun</span><span class="t" style="left:26.90px;top:365.22px;font-size:25.14px;letter-spacing:0.513px;">Date</span><span class="t" style="left:88.06px;top:369.58px;font-size:19.99px;letter-spacing:-0.440px;">01-31</span><span class="t" style="left:26.90px;top:432.09px;font-size:26.0px;letter-spacing:-0.121px;">Full_minute</span><span class="t" style="left:166.06px;top:435.18px;font-size:21.17px;letter-spacing:-0.402px;">yyyy-MM-dd</span><span class="t" style="left:26.90px;top:469.83px;font-size:20.52px;letter-spacing:-0.500px;">HH:mm</span></div><div class="ddtrack"></div><div class="ddthumb"></div></div>
</body></html>
